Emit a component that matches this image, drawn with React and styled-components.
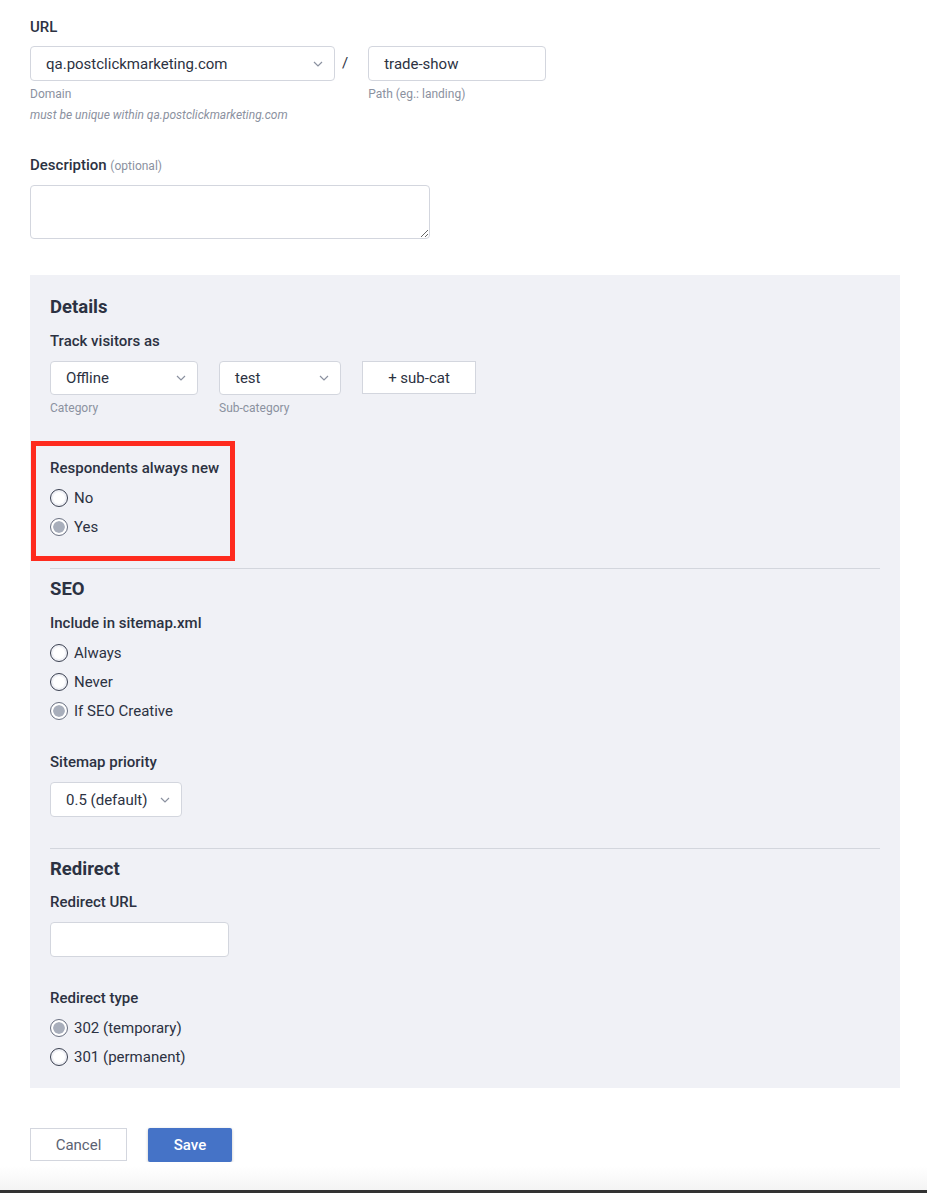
import styled, { createGlobalStyle } from 'styled-components'

const GlobalStyle = createGlobalStyle`
body{
  margin:0;
  background:#fff;
  font-family:Roboto, "Liberation Sans", Arial, sans-serif;
  color:#2c3242;
}
*{box-sizing:border-box;}
`

const Page = styled.div`
display:flex;
flex-direction:column;
padding:18px 27px 0 30px;
`

const Label = styled.div`
font-size:15px;
line-height:18px;
font-weight:500;
color:#2c3242;
margin-top:${p => p.top || 0}px;
`
const Optional = styled.span`
font-size:12px;
font-weight:400;
color:#8b91a0;
`
const Heading = styled.div`
font-size:18.5px;
line-height:22px;
font-weight:700;
color:#2c3242;
margin-top:${p => p.top || 0}px;
`
const Hint = styled.div`
font-size:12px;
line-height:16px;
color:#8b91a0;
margin-top:5px;
font-style:${p => p.italic ? 'italic' : 'normal'};
`

const Row = styled.div`
display:flex;
flex-direction:row;
align-items:flex-start;
gap:${p => p.gap ?? 21}px;
margin-top:${p => p.top || 10}px;
`
const Field = styled.div`
display:flex;
flex-direction:column;
`
const Slash = styled.div`
font-size:15px;
height:35px;
line-height:35px;
margin:0 20px 0 7px;
`

const SelectBox = styled.div`
display:flex;
align-items:center;
justify-content:space-between;
width:${p => p.w}px;
height:${p => p.h || 35}px;
padding:0 11px 0 15px;
background:#fff;
border:1px solid #d3d6de;
border-radius:4px;
font-size:15px;
color:#2c3242;
`
const TextBox = styled.div`
display:flex;
align-items:center;
width:${p => p.w}px;
height:35px;
padding:0 15px;
background:#fff;
border:1px solid #d3d6de;
border-radius:4px;
font-size:15px;
color:#2c3242;
margin-top:${p => p.top || 0}px;
`
const TextArea = styled.textarea`
display:block;
width:400px;
height:54px;
margin-top:10px;
border:1px solid #d3d6de;
border-radius:4px;
background:#fff;
font-family:inherit;
`
const GhostButton = styled.button`
height:33px;
width:${p => p.w}px;
background:#fff;
border:1px solid #d3d6de;
border-radius:0;
font-family:inherit;
font-size:15px;
color:${p => p.color || '#2c3242'};
padding:0;
`
const PrimaryButton = styled.button`
height:34px;
width:84px;
background:#4573c7;
border:none;
border-radius:2px;
box-shadow:0 1px 3px rgba(0,0,0,0.25);
color:#fff;
font-family:inherit;
font-size:15px;
font-weight:500;
padding:0;
`

const Panel = styled.div`
display:flex;
flex-direction:column;
margin-top:36px;
background:#f0f1f6;
padding:21px 20px 21px 20px;
`
const Divider = styled.div`
height:1px;
background:#d3d6dd;
margin-top:${p => p.top || 0}px;
margin-bottom:9px;
`
const Highlight = styled.div`
display:flex;
flex-direction:column;
width:204px;
margin:25px 0 0 -19px;
border:5px solid #fe2b1e;
padding:13px 0 19px 14px;
`

const RadioList = styled.div`
display:flex;
flex-direction:column;
gap:9px;
margin-top:${p => p.top || 11}px;
`
const RadioRow = styled.div`
display:flex;
align-items:center;
gap:6px;
height:20px;
font-size:15px;
color:#2c3242;
`
const Circle = styled.span`
width:18px;
height:18px;
border-radius:50%;
border:1px solid ${p => p.checked ? '#6a7080' : '#3a4050'};
padding:2px;
background:${p => p.checked ? '#a8aebb' : '#fff'};
background-clip:content-box;
box-shadow:${p => p.checked ? 'inset 0 0 0 2px #fff' : 'none'};
`

const Actions = styled.div`
display:flex;
gap:21px;
margin-top:40px;
align-items:flex-start;
`
const Footer = styled.div`
height:31px;
margin:0 -27px 0 -30px;
background:linear-gradient(#fff 0%, #fff 15%, #f4f4f4 100%);
border-bottom:3px solid #333;
`

const Chevron = () => (
  <svg width="10" height="6" viewBox="0 0 10 6" fill="none">
    <path d="M1 1l4 4 4-4" stroke="#8b91a0" strokeWidth="1.2" />
  </svg>
)

const Select = ({ w, h, value }) => (
  <SelectBox w={w} h={h}>
    <span>{value}</span>
    <Chevron />
  </SelectBox>
)

const Radios = ({ options, selected, top }) => (
  <RadioList top={top}>
    {options.map(o => (
      <RadioRow key={o}>
        <Circle checked={o === selected} />
        {o}
      </RadioRow>
    ))}
  </RadioList>
)

export default function App() {
  return (
    <>
      <GlobalStyle />
      <Page>
        <Label>URL</Label>
        <Row gap={0}>
          <Field>
            <Select w={305} value="qa.postclickmarketing.com" />
            <Hint>Domain</Hint>
          </Field>
          <Slash>/</Slash>
          <Field>
            <TextBox w={178}>trade-show</TextBox>
            <Hint>Path (eg.: landing)</Hint>
          </Field>
        </Row>
        <Hint italic>must be unique within qa.postclickmarketing.com</Hint>

        <Label top={33}>Description <Optional>(optional)</Optional></Label>
        <TextArea />

        <Panel>
          <Heading>Details</Heading>
          <Label top={14}>Track visitors as</Label>
          <Row top={11}>
            <Field>
              <Select w={148} h={34} value="Offline" />
              <Hint>Category</Hint>
            </Field>
            <Field>
              <Select w={122} h={34} value="test" />
              <Hint>Sub-category</Hint>
            </Field>
            <GhostButton w={114}>+ sub-cat</GhostButton>
          </Row>

          <Highlight>
            <Label>Respondents always new</Label>
            <Radios options={['No', 'Yes']} selected="Yes" />
          </Highlight>

          <Divider top={7} />
          <Heading>SEO</Heading>
          <Label top={14}>Include in sitemap.xml</Label>
          <Radios options={['Always', 'Never', 'If SEO Creative']} selected="If SEO Creative" />
          <Label top={32}>Sitemap priority</Label>
          <Row top={11}>
            <Select w={132} value="0.5 (default)" />
          </Row>

          <Divider top={31} />
          <Heading>Redirect</Heading>
          <Label top={13}>Redirect URL</Label>
          <TextBox w={179} top={11} />
          <Label top={32}>Redirect type</Label>
          <Radios options={['302 (temporary)', '301 (permanent)']} selected="302 (temporary)" />
        </Panel>

        <Actions>
          <GhostButton w={97} color="#5b6272">Cancel</GhostButton>
          <PrimaryButton>Save</PrimaryButton>
        </Actions>
        <Footer />
      </Page>
    </>
  )
}
